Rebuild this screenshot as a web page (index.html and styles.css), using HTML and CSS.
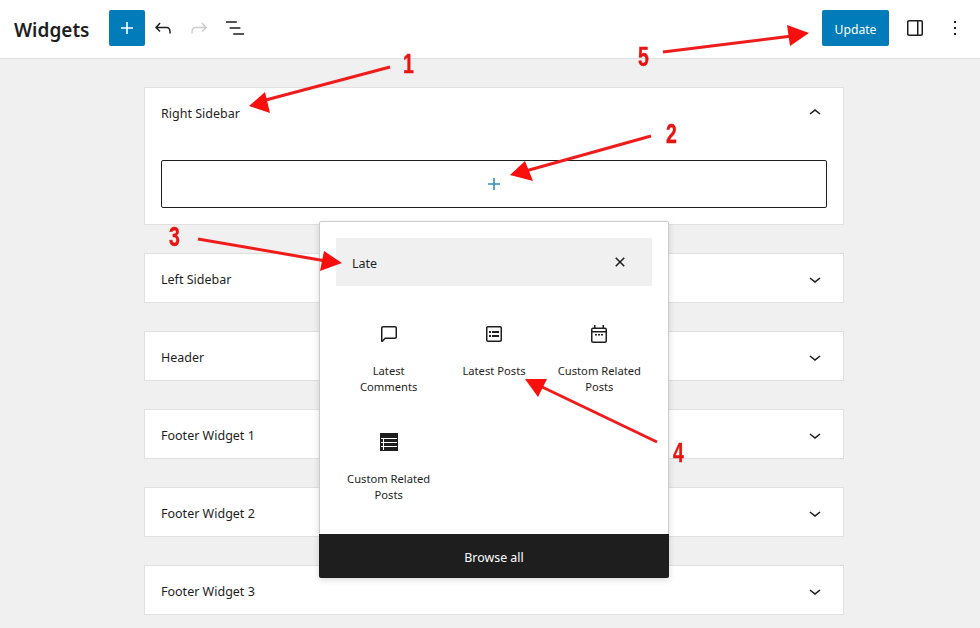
FILE: index.html
```html
<!DOCTYPE html>
<html lang="en">
<head>
  <meta charset="UTF-8">
  <meta name="viewport" content="width=device-width, initial-scale=1.0">
  <title>Widgets</title>
  <link rel="stylesheet" href="styles.css">
</head>
<body>

  <div class="app">
    <!-- Top bar -->
    <header class="topbar">
      <h1>Widgets</h1>
      <button class="btn-add" aria-label="Add block">
        <svg viewBox="0 0 24 24" width="24" height="24"><path d="M18 11.2h-5.2V6h-1.6v5.2H6v1.6h5.2V18h1.6v-5.2H18z"/></svg>
      </button>
      <button class="btn-icon" aria-label="Undo">
        <svg viewBox="0 0 24 24" width="24" height="24"><path d="M18.3 11.7c-.6-.6-1.4-.9-2.3-.9H6.7l2.9-3.3-1.1-1-4.5 5L8.5 16l1-1-2.7-2.7H16c.5 0 .9.2 1.3.5 1 1 1 3.4 1 4.5v.3h1.500v-.2c0-1.500 0-4.300-1.500-5.700z"/></svg>
      </button>
      <button class="btn-icon disabled" aria-label="Redo">
        <svg viewBox="0 0 24 24" width="24" height="24"><path d="M15.6 6.5l-1.1 1 2.9 3.3H8c-.9 0-1.7.3-2.3.9-1.4 1.500-1.400 4.200-1.400 5.600v.2h1.500v-.3c0-1.100 0-3.500 1-4.500.3-.3.7-.5 1.300-.5h9.200L14.500 15l1.100 1.100 4.600-4.600-4.600-5z"/></svg>
      </button>
      <button class="btn-icon" aria-label="List view">
        <svg viewBox="0 0 24 24" width="24" height="24"><path d="M13.8 5.2H3v1.5h10.8V5.2zm-3.6 12v1.5H21v-1.5H10.2zm7.2-6H6.6v1.5h10.8v-1.5z"/></svg>
      </button>
      <div class="topbar-right">
        <button class="btn-update">Update</button>
        <button class="btn-icon" aria-label="Settings">
          <svg viewBox="0 0 24 24" width="24" height="24"><path d="M18 4H6c-1.100 0-2 .9-2 2v12c0 1.100.9 2 2 2h12c1.100 0 2-.9 2-2V6c0-1.100-.9-2-2-2zm-4 14.500H6c-.3 0-.5-.2-.5-.5V6c0-.3.2-.5.5-.5h8v13zm4.500-.5c0 .3-.2.5-.5.5h-2.500v-13H18c.3 0 .5.2.5.5v12z"/></svg>
        </button>
        <button class="btn-icon" aria-label="Options">
          <svg viewBox="0 0 24 24" width="24" height="24"><path d="M13 19h-2v-2h2v2zm0-6h-2v-2h2v2zm0-6h-2V5h2v2z"/></svg>
        </button>
      </div>
    </header>

    <!-- Widget areas -->
    <main class="areas">
      <section class="area">
        <div class="area-head">
          <span>Right Sidebar</span>
          <svg viewBox="0 0 24 24" width="24" height="24"><path d="M6.5 12.4L12 8l5.5 4.4-.9 1.2L12 10l-4.5 3.6-1-1.2z"/></svg>
        </div>
        <div class="area-body">
          <div class="add-block">
            <svg viewBox="0 0 24 24" width="24" height="24"><path d="M18 11.2h-5.2V6h-1.6v5.2H6v1.6h5.2V18h1.6v-5.2H18z"/></svg>
          </div>
        </div>
      </section>
      <section class="area">
        <div class="area-head">
          <span>Left Sidebar</span>
          <svg viewBox="0 0 24 24" width="24" height="24"><path d="M17.5 11.6L12 16l-5.5-4.4.9-1.2L12 14l4.5-3.6 1 1.2z"/></svg>
        </div>
      </section>
      <section class="area">
        <div class="area-head">
          <span>Header</span>
          <svg viewBox="0 0 24 24" width="24" height="24"><path d="M17.5 11.6L12 16l-5.5-4.4.9-1.2L12 14l4.5-3.6 1 1.2z"/></svg>
        </div>
      </section>
      <section class="area">
        <div class="area-head">
          <span>Footer Widget 1</span>
          <svg viewBox="0 0 24 24" width="24" height="24"><path d="M17.5 11.6L12 16l-5.5-4.4.9-1.2L12 14l4.5-3.6 1 1.2z"/></svg>
        </div>
      </section>
      <section class="area">
        <div class="area-head">
          <span>Footer Widget 2</span>
          <svg viewBox="0 0 24 24" width="24" height="24"><path d="M17.5 11.6L12 16l-5.5-4.4.9-1.2L12 14l4.5-3.6 1 1.2z"/></svg>
        </div>
      </section>
      <section class="area">
        <div class="area-head">
          <span>Footer Widget 3</span>
          <svg viewBox="0 0 24 24" width="24" height="24"><path d="M17.5 11.6L12 16l-5.5-4.4.9-1.2L12 14l4.5-3.6 1 1.2z"/></svg>
        </div>
      </section>
    </main>

    <!-- Block inserter popover -->
    <div class="inserter">
      <div class="inserter-search">
        <span>Late</span>
        <svg viewBox="0 0 24 24" width="24" height="24"><path d="M12 13.06l3.712 3.713 1.061-1.06L13.061 12l3.712-3.712-1.06-1.06L12 10.938 8.288 7.227l-1.061 1.06L10.939 12l-3.712 3.712 1.06 1.061L12 13.061z"/></svg>
      </div>
      <div class="inserter-grid">
        <div class="block-item">
          <svg viewBox="0 0 24 24" width="24" height="24"><path d="M18 4H6c-1.100 0-2 .9-2 2v12.900c0 .6.5 1.100 1.100 1.100.3 0 .5-.1.8-.3L8.500 17H18c1.100 0 2-.9 2-2V6c0-1.100-.9-2-2-2zm.5 11c0 .3-.2.5-.5.5H7.900l-2.400 2.400V6c0-.3.2-.5.5-.5h12c.3 0 .5.2.5.5v9z"/></svg>
          <span>Latest Comments</span>
        </div>
        <div class="block-item">
          <svg viewBox="0 0 24 24" width="24" height="24"><path d="M18 4H6c-1.100 0-2 .9-2 2v12c0 1.100.9 2 2 2h12c1.100 0 2-.9 2-2V6c0-1.100-.9-2-2-2zm.5 14c0 .3-.2.5-.5.5H6c-.3 0-.5-.2-.5-.5V6c0-.3.2-.5.5-.5h12c.3 0 .5.2.5.5v12zM7 11h2V9H7v2zm0 4h2v-2H7v2zm3-4h7V9h-7v2zm0 4h7v-2h-7v2z"/></svg>
          <span>Latest Posts</span>
        </div>
        <div class="block-item">
          <svg viewBox="0 0 24 24" width="24" height="24"><path d="M18 5.500h-1V3h-1.500v2.500h-7V3H7v2.500H6c-1.100 0-2 .9-2 2V19c0 1.100.9 2 2 2h12c1.100 0 2-.9 2-2V7.500c0-1.100-.9-2-2-2zm.5 13.500c0 .3-.2.5-.5.5H6c-.3 0-.5-.2-.5-.5v-8.500h13V19zm0-10H5.500V7.500c0-.3.2-.5.5-.5h12c.3 0 .5.2.5.5V9zM8 12h2v1.500H8zm3 0h2v1.500h-2zm3 0h2v1.500h-2z"/></svg>
          <span>Custom Related Posts</span>
        </div>
        <div class="block-item">
          <svg viewBox="0 0 24 24" width="24" height="24"><path d="M3 3h18v18H3z"/><path class="cut" d="M4 8h16v1H4zm0 4h16v1H4zm0 4h16v1H4zM6 8h1v12H6z"/></svg>
          <span>Custom Related Posts</span>
        </div>
      </div>
      <div class="inserter-browse">Browse all</div>
    </div>

    <!-- Annotation arrows -->
    <svg class="arrows" viewBox="0 0 980 628" width="980" height="628">
      <path class="shaft" d="M390 67L262 101"/>
      <path class="head" d="M249 106L265 92L270 113z"/>
      <path class="shaft" d="M651 136L522 172"/>
      <path class="head" d="M510 175L525 161L533 181z"/>
      <path class="shaft" d="M198 239L326 261"/>
      <path class="head" d="M342 263L324 251L320 271z"/>
      <path class="shaft" d="M657 442L538 385"/>
      <path class="head" d="M525 379L547 379L538 397z"/>
      <path class="shaft" d="M663 52L792 36"/>
      <path class="head" d="M809 33L787 25L790 46z"/>
    </svg>
    <span class="mark mark-1">1</span>
    <span class="mark mark-2">2</span>
    <span class="mark mark-3">3</span>
    <span class="mark mark-4">4</span>
    <span class="mark mark-5">5</span>
  </div>

</body>
</html>
```

FILE: styles.css
```css
html, body {
  margin: 0;
  padding: 0;
}

body {
  font-family: "Noto Sans", "Open Sans", sans-serif;
  font-size: 12.5px;
  color: #1e1e1e;
  background-color: #f0f0f0;
}

svg {
  fill: currentColor;
  display: block;
}

button {
  font-family: inherit;
  color: inherit;
  border: none;
  background: none;
  padding: 0;
}

.app {
  position: relative;
  height: 628px;
  overflow: hidden;
}

.topbar {
  display: flex;
  align-items: center;
  box-sizing: border-box;
  height: 59px;
  padding: 0 7px 2px 14px;
  background-color: #fff;
  border-bottom: 1px solid #e0e0e0;
}

.topbar h1 {
  margin: 4px 20px 0 0;
  font-size: 19px;
  font-weight: 600;
}

.btn-add {
  display: flex;
  align-items: center;
  justify-content: center;
  width: 36px;
  height: 36px;
  color: #fff;
  background-color: #007cba;
  border-radius: 2px;
}

.btn-icon {
  display: flex;
  align-items: center;
  justify-content: center;
  width: 36px;
  height: 36px;
}

.btn-icon.disabled {
  color: #ccc;
}

.topbar-right {
  display: flex;
  align-items: center;
  gap: 4px;
  margin-left: auto;
}

.btn-update {
  width: 67px;
  height: 36px;
  margin-right: 4px;
  padding-top: 2px;
  font-size: 12.2px;
  color: #fff;
  background-color: #007cba;
  border-radius: 2px;
}

.areas {
  display: flex;
  flex-direction: column;
  gap: 28px;
  width: 700px;
  margin-left: 144px;
  padding-top: 28px;
}

.area {
  background-color: #fff;
  border: 1px solid #e0e0e0;
}

.area-head {
  display: flex;
  align-items: center;
  justify-content: space-between;
  box-sizing: border-box;
  height: 48px;
  padding: 2px 16px 0;
}

.area-body {
  padding: 24px 16px 16px;
}

.add-block {
  display: flex;
  align-items: center;
  justify-content: center;
  height: 46px;
  color: #2f8fc0;
  border: 1px solid #1e1e1e;
  border-radius: 2px;
}

.inserter {
  position: absolute;
  left: 319px;
  top: 221px;
  width: 350px;
  height: 357px;
  display: flex;
  flex-direction: column;
  box-sizing: border-box;
  background-color: #fff;
  border: 1px solid #ccc;
  border-radius: 2px;
  box-shadow: 0 2px 6px rgba(0, 0, 0, 0.15);
}

.inserter-search {
  display: flex;
  align-items: center;
  justify-content: space-between;
  height: 48px;
  margin: 16px 16px 0;
  padding: 0 20px 0 16px;
  background-color: #f0f0f0;
}

.inserter-search span {
  padding-top: 2px;
}

.inserter-grid {
  display: grid;
  grid-template-columns: repeat(3, 1fr);
  grid-auto-rows: 108px;
  margin: 0 16px;
  padding-top: 20px;
}

.block-item {
  display: flex;
  flex-direction: column;
  align-items: center;
  padding: 16px 10px 0;
  font-size: 11.2px;
  line-height: 16px;
  text-align: center;
}

.block-item span {
  margin-top: 17px;
}

.block-item .cut {
  fill: #fff;
}

.inserter-browse {
  margin: auto -1px -1px;
  height: 44px;
  line-height: 47px;
  font-size: 12.4px;
  text-align: center;
  color: #fff;
  background-color: #1e1e1e;
  border-radius: 0 0 2px 2px;
}

.arrows {
  position: absolute;
  left: 0;
  top: 0;
  filter: blur(0.4px);
}

.arrows .shaft {
  fill: none;
  stroke: #f01c1c;
  stroke-width: 3;
}

.arrows .head {
  fill: #fa0f0f;
}

.mark {
  position: absolute;
  font-family: "Liberation Sans", sans-serif;
  font-size: 27px;
  line-height: 27px;
  font-weight: 700;
  color: #e81414;
  -webkit-text-stroke: 0.4px #e81414;
  transform: scaleX(0.72);
}

.mark-1 { left: 401px; top: 51px; }
.mark-2 { left: 664px; top: 121px; }
.mark-3 { left: 167px; top: 224px; }
.mark-4 { left: 671px; top: 440px; }
.mark-5 { left: 636px; top: 44px; }
```
